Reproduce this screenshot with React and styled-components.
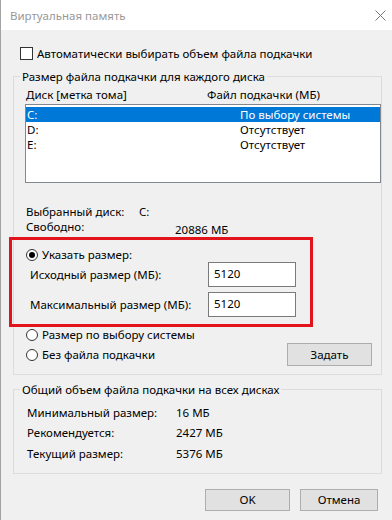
import React from "react";
import styled, { createGlobalStyle } from "styled-components";

const Global = createGlobalStyle`
  html, body { margin: 0; padding: 0; background: #f0f0f0; }
  body {
    font-family: "Noto Sans", "Segoe UI", sans-serif;
    font-size: 11.5px;
    color: #000;
  }
  * { box-sizing: border-box; }
`;

const Window = styled.div`
  position: relative;
  width: 392px;
  height: 520px;
  border-left: 1px solid #a3a3a3;
  background: #f0f0f0;
  overflow: hidden;
  display: flex;
  flex-direction: column;
`;

const TitleBar = styled.div`
  height: 30px;
  flex: none;
  background: #fff;
  display: flex;
  align-items: center;
  justify-content: space-between;
  padding: 0 6px 0 9px;
`;

const Title = styled.span`
  color: #999;
  font-size: 11.5px;
  line-height: 15px;
`;

const Body = styled.div`
  display: flex;
  flex-direction: column;
  padding: 15px 10px 0 12px;
`;

const CheckRow = styled.label`
  display: flex;
  align-items: center;
  gap: 4px;
  height: 16px;
  margin-left: 7px;
  line-height: 15px;
`;

const CheckBox = styled.span`
  width: 13px;
  height: 13px;
  border: 1px solid #333;
  background: #fff;
  flex: none;
`;

const Group = styled.fieldset`
  margin: ${(p) => p.$top}px 0 0 0;
  padding: 0 0 ${(p) => p.$bottom}px 0;
  border: 1px solid #dcdcdc;
  min-width: 0;
`;

const Legend = styled.legend`
  margin-left: 6px;
  padding: 0 2px;
  line-height: 15px;
`;

const Headers = styled.div`
  display: grid;
  grid-template-columns: 181px 1fr;
  padding-left: 12px;
  margin-top: 3px;
  line-height: 15px;
`;

const ListBox = styled.div`
  margin: 2px 0 0 11px;
  height: 79px;
  background: #fff;
  border: 1px solid #828790;
  padding-top: 2px;
`;

const ListRow = styled.div`
  display: grid;
  grid-template-columns: 213px 1fr;
  height: 15px;
  line-height: 15px;
  padding-left: 1px;
  background: ${(p) => (p.$selected ? "#0078d7" : "transparent")};
  color: ${(p) => (p.$selected ? "#fff" : "#000")};
`;

const InfoRow = styled.div`
  display: grid;
  grid-template-columns: ${(p) => p.$col}px 1fr;
  padding-left: 12px;
  line-height: 15px;
  margin-top: ${(p) => p.$top || 0}px;
`;

const InfoValue = styled.span`
  padding-top: ${(p) => p.$shift || 0}px;
`;

const RadioRow = styled.label`
  display: flex;
  align-items: center;
  gap: 4px;
  padding-left: 12px;
  height: 15px;
  line-height: 15px;
  margin-top: ${(p) => p.$top || 0}px;
`;

const Radio = styled.span`
  width: 12px;
  height: 12px;
  border-radius: 50%;
  border: 1px solid #333;
  background: #fff;
  flex: none;
  display: flex;
  align-items: center;
  justify-content: center;
  &::after {
    content: "";
    width: 6px;
    height: 6px;
    border-radius: 50%;
    background: ${(p) => (p.$checked ? "#000" : "transparent")};
  }
`;

const FieldRow = styled.div`
  display: grid;
  grid-template-columns: 178px 88px;
  align-items: center;
  padding-left: 16px;
  margin-top: ${(p) => p.$top || 0}px;
`;

const Input = styled.div`
  height: 25px;
  border: 1px solid #7a7a7a;
  background: #fff;
  padding-left: 5px;
  line-height: 22px;
`;

const ActionRow = styled.div`
  display: flex;
  align-items: center;
  justify-content: space-between;
  padding-right: 9px;
  margin-top: 1px;
`;

const Button = styled.div`
  width: ${(p) => p.$w}px;
  height: ${(p) => p.$h || 22}px;
  background: #e1e1e1;
  border: 1px solid #adadad;
  display: flex;
  align-items: center;
  justify-content: center;
  line-height: 15px;
`;

const SumRow = styled.div`
  display: grid;
  grid-template-columns: 149px 1fr;
  padding-left: 13px;
  height: 20.5px;
  align-items: center;
`;

const SumList = styled.div`
  margin-top: 5px;
  display: flex;
  flex-direction: column;
`;

const Footer = styled.div`
  display: flex;
  gap: 10px;
  margin: 15px 0 0 192px;
`;

const Highlight = styled.div`
  position: absolute;
  left: 8px;
  top: 237px;
  width: 304px;
  height: 90px;
  border: 3px solid #e3131b;
  pointer-events: none;
`;

const CloseIcon = () => (
  <svg width="11" height="11" viewBox="0 0 11 11">
    <path d="M0.5 0.5 L10.5 10.5 M10.5 0.5 L0.5 10.5" stroke="#777" strokeWidth="1" fill="none" />
  </svg>
);

export default function App() {
  return (
    <>
      <Global />
      <Window>
        <TitleBar>
          <Title>Виртуальная память</Title>
          <CloseIcon />
        </TitleBar>
        <Body>
          <CheckRow>
            <CheckBox />
            Автоматически выбирать объем файла подкачки
          </CheckRow>

          <Group $top={8} $bottom={8}>
            <Legend>Размер файла подкачки для каждого диска</Legend>
            <Headers>
              <span>Диск [метка тома]</span>
              <span>Файл подкачки (МБ)</span>
            </Headers>
            <ListBox>
              <ListRow $selected>
                <span>C:</span>
                <span>По выбору системы</span>
              </ListRow>
              <ListRow>
                <span>D:</span>
                <span>Отсутствует</span>
              </ListRow>
              <ListRow>
                <span>E:</span>
                <span>Отсутствует</span>
              </ListRow>
            </ListBox>

            <InfoRow $col={113} $top={21}>
              <span>Выбранный диск:</span>
              <InfoValue>C:</InfoValue>
            </InfoRow>
            <InfoRow $col={149}>
              <span>Свободно:</span>
              <InfoValue $shift={3}>20886 МБ</InfoValue>
            </InfoRow>

            <RadioRow $top={10}>
              <Radio $checked />
              Указать размер:
            </RadioRow>
            <FieldRow>
              <span>Исходный размер (МБ):</span>
              <Input>5120</Input>
            </FieldRow>
            <FieldRow $top={5}>
              <span>Максимальный размер (МБ):</span>
              <Input>5120</Input>
            </FieldRow>

            <RadioRow $top={10}>
              <Radio />
              Размер по выбору системы
            </RadioRow>
            <ActionRow>
              <RadioRow>
                <Radio />
                Без файла подкачки
              </RadioRow>
              <Button $w={85} $h={23}>Задать</Button>
            </ActionRow>
          </Group>

          <Group $top={7} $bottom={9}>
            <Legend>Общий объем файла подкачки на всех дисках</Legend>
            <SumList>
              <SumRow>
                <span>Минимальный размер:</span>
                <span>16 МБ</span>
              </SumRow>
              <SumRow>
                <span>Рекомендуется:</span>
                <span>2427 МБ</span>
              </SumRow>
              <SumRow>
                <span>Текущий размер:</span>
                <span>5376 МБ</span>
              </SumRow>
            </SumList>
          </Group>

          <Footer>
            <Button $w={85}>OK</Button>
            <Button $w={78}>Отмена</Button>
          </Footer>
        </Body>
        <Highlight />
      </Window>
    </>
  );
}
